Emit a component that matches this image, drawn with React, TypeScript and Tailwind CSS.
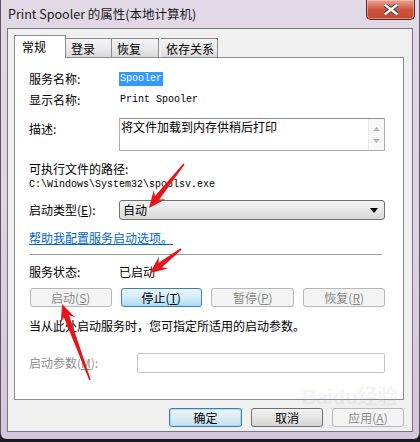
import type { ReactNode } from "react"

const cjk = { fontFamily: '"Noto Sans CJK SC", "Liberation Sans", sans-serif' }
const mono = { fontFamily: '"Liberation Mono", "Noto Sans CJK SC", monospace' }

type BtnKind = "normal" | "disabled" | "focus" | "default"

function WinButton({ kind, width, children }: { kind: BtnKind; width: string; children: ReactNode }) {
  const skins: Record<BtnKind, string> = {
    normal: "border-[#707070] bg-gradient-to-b from-[#f3f3f3] via-[#e6e6e6] to-[#d4d4d4] text-black",
    disabled: "border-[#b5b8bb] bg-[#f4f4f4] text-[#8a8a8a]",
    focus: "border-[#3c7fb1] bg-gradient-to-b from-[#eaf6fd] via-[#d3edfb] to-[#a9dbf6] text-black",
    default: "border-[#3c7fb1] shadow-[inset_0_0_0_1px_#9fdcfd] bg-gradient-to-b from-[#eef7fc] via-[#dcecf6] to-[#c4e0f1] text-black",
  }
  return (
    <div
      className={`${width} h-[19px] flex items-center justify-center rounded-[3px] border text-[12px] leading-none ${skins[kind]}`}
      style={cjk}
    >
      {children}
    </div>
  )
}

function Arrow({ x1, y1, x2, y2 }: { x1: number; y1: number; x2: number; y2: number }) {
  const dx = x2 - x1
  const dy = y2 - y1
  const len = Math.sqrt(dx * dx + dy * dy)
  const ux = dx / len
  const uy = dy / len
  const px = -uy
  const py = ux
  const headLen = 17
  const bx = x2 - ux * headLen
  const by = y2 - uy * headLen
  const nx = x2 - ux * (headLen - 4)
  const ny = y2 - uy * (headLen - 4)
  const pt = (x: number, y: number, w: number) => `${x + px * w},${y + py * w}`
  const points = [
    pt(x1, y1, 0.8),
    pt(nx, ny, 2.8),
    pt(bx, by, 7.5),
    `${x2},${y2}`,
    pt(bx, by, -7.5),
    pt(nx, ny, -2.8),
    pt(x1, y1, -0.8),
  ].join(" ")
  return <polygon points={points} fill="#e8141b" />
}

function Tab({ label, width, active }: { label: string; width: string; active?: boolean }) {
  if (active) {
    return (
      <div className={`relative z-10 -mb-px h-[23px] ${width} border border-b-0 border-[#898c95] bg-white pl-[7px] pt-[4px] text-[12px] leading-[14px]`}>
        {label}
      </div>
    )
  }
  return (
    <div className={`h-[19px] ${width} border border-b-0 border-l-0 border-[#898c95] bg-gradient-to-b from-[#f4f4f4] via-[#ebebeb] to-[#d9d9d9] pl-[5px] pt-[3px] text-[12px] leading-[14px]`}>
      {label}
    </div>
  )
}

export default function App() {
  return (
    <div className="relative w-[420px] h-[442px] overflow-hidden bg-[#1b1b1f]" style={cjk}>
      <div className="h-[439px] rounded-b-[6px] bg-gradient-to-b from-[#e2d9e7] via-[#ddd3e3] to-[#d4c6dc] border-x border-[#5d5560] flex flex-col">
        {/* title bar */}
        <div className="h-[28px] flex items-center pl-[7px] text-[12.5px] text-[#1a1a1a]">
          Print Spooler 的属性(本地计算机)
        </div>

        {/* client area */}
        <div className="mx-[6px] h-[404px] border border-[#7c7481] bg-[#f0f0f0] pl-[6px] pr-[8px] pt-[6px] flex flex-col">
          <div className="flex items-end h-[22px] text-black">
            <Tab label="常规" width="w-[52px]" active />
            <Tab label="登录" width="w-[46px]" />
            <Tab label="恢复" width="w-[47px]" />
            <div className="w-[2px]" />
            <Tab label="依存关系" width="w-[57px] border-l" />
          </div>

          <div className="h-[343px] border border-[#898c95] bg-white pl-[14px] pr-[18px] flex flex-col text-[12px] text-black">
            <div className="mt-[14px] h-[14px] flex items-center">
              <span className="w-[90px] leading-[14px]">服务名称:</span>
              <span className="bg-[#3399ff] text-white text-[10px] leading-[14px] px-px" style={mono}>Spooler</span>
            </div>
            <div className="mt-[7px] h-[14px] flex items-center">
              <span className="w-[90px] leading-[14px]">显示名称:</span>
              <span className="text-[10px] leading-[14px] pl-px" style={mono}>Print Spooler</span>
            </div>
            <div className="mt-[11px] flex">
              <span className="w-[90px] mt-[4px] leading-[14px]">描述:</span>
              <div className="flex-1 h-[33px] border border-[#abadb3] border-t-[#8e8f8f] flex">
                <div className="flex-1 pl-[1px] leading-[14px] pt-[1px]">将文件加载到内存供稍后打印</div>
                <div className="w-[16px] bg-[#f7f7f7] border-l border-[#e8e8e8] flex flex-col items-center justify-center gap-[8px]">
                  <svg width="7" height="4" viewBox="0 0 7 4"><path d="M0 4 L3.5 0 L7 4 Z" fill="#b8b8b8" /></svg>
                  <svg width="7" height="4" viewBox="0 0 7 4"><path d="M0 0 L3.5 4 L7 0 Z" fill="#b8b8b8" /></svg>
                </div>
              </div>
            </div>
            <div className="mt-[11px] h-[14px] leading-[14px]">可执行文件的路径:</div>
            <div className="mt-[2px] h-[14px] text-[10px] leading-[14px]" style={mono}>
              C:\Windows\System32\spoolsv.exe
            </div>
            <div className="mt-[8px] h-[20px] flex items-center">
              <span className="w-[90px] leading-[14px]">
                启动类型(<span className="underline">E</span>):
              </span>
              <div className="flex-1 h-[20px] rounded-[3px] border border-[#707070] bg-gradient-to-b from-[#f2f2f2] via-[#e8e8e8] to-[#d6d6d6] flex items-center pl-[3px] pr-[6px]">
                <span className="flex-1 leading-[14px]">自动</span>
                <svg width="8" height="5" viewBox="0 0 8 5"><path d="M0 0 L8 0 L4 5 Z" fill="#000" /></svg>
              </div>
            </div>
            <div className="mt-[11px] h-[14px] leading-[14px] text-[#0066cc] underline">帮助我配置服务启动选项。</div>
            <div className="mt-[9px] w-[353px] h-px bg-[#a0a0a0]" />
            <div className="mt-[10px] h-[14px] flex items-center">
              <span className="w-[90px] leading-[14px]">服务状态:</span>
              <span className="leading-[14px]">已启动</span>
            </div>
            <div className="mt-[9px] flex gap-[9px] pl-px">
              <WinButton kind="disabled" width="w-[82px]">启动(<span className="underline">S</span>)</WinButton>
              <WinButton kind="focus" width="w-[82px]">停止(<span className="underline">T</span>)</WinButton>
              <WinButton kind="disabled" width="w-[84px]">暂停(<span className="underline">P</span>)</WinButton>
              <WinButton kind="disabled" width="w-[82px]">恢复(<span className="underline">R</span>)</WinButton>
            </div>
            <div className="mt-[12px] h-[14px] leading-[14px]">当从此处启动服务时，您可指定所适用的启动参数。</div>
            <div className="mt-[20px] h-[20px] flex items-center">
              <span className="w-[108px] leading-[14px] text-[#8d8d8d]">
                启动参数(<span className="underline">M</span>):
              </span>
              <div className="flex-1 h-[20px] rounded-[2px] border border-[#c2c5c8] bg-white" />
            </div>
          </div>

          <div className="mt-[8px] flex justify-end gap-[9px]">
            <WinButton kind="default" width="w-[73px]">确定</WinButton>
            <WinButton kind="normal" width="w-[72px]">取消</WinButton>
            <WinButton kind="disabled" width="w-[72px]">应用(<span className="underline">A</span>)</WinButton>
          </div>
        </div>
      </div>

      {/* close button */}
      <div className="absolute right-[5px] top-0 w-[49px] h-[20px] rounded-b-[5px] border border-t-0 border-[#4d2a28] bg-gradient-to-b from-[#e9a594] via-[#d0553d] to-[#c8452d] flex items-center justify-center shadow-[inset_0_0_0_1px_rgba(255,210,200,0.5)]">
        <svg width="14" height="11" viewBox="0 0 14 11">
          <path d="M1 1 L13 10 M13 1 L1 10" stroke="#3d3d3d" strokeWidth="4.2" strokeLinecap="square" />
          <path d="M1.5 1.2 L12.5 9.8 M12.5 1.2 L1.5 9.8" stroke="#ffffff" strokeWidth="2.4" strokeLinecap="square" />
        </svg>
      </div>

      {/* watermark */}
      <div className="absolute left-[302px] top-[387px] whitespace-nowrap text-[20px] font-bold leading-none text-[#a0a0a0] opacity-[0.12]" style={{ fontFamily: '"Liberation Sans", "Noto Sans CJK SC", sans-serif' }}>
        Baidu经验
      </div>

      {/* annotation arrows */}
      <svg className="absolute inset-0 pointer-events-none" width="420" height="442">
        <Arrow x1={184} y1={164} x2={149} y2={208} />
        <Arrow x1={181} y1={249} x2={150} y2={273} />
        <Arrow x1={90} y1={380} x2={62} y2={304} />
      </svg>
    </div>
  )
}
